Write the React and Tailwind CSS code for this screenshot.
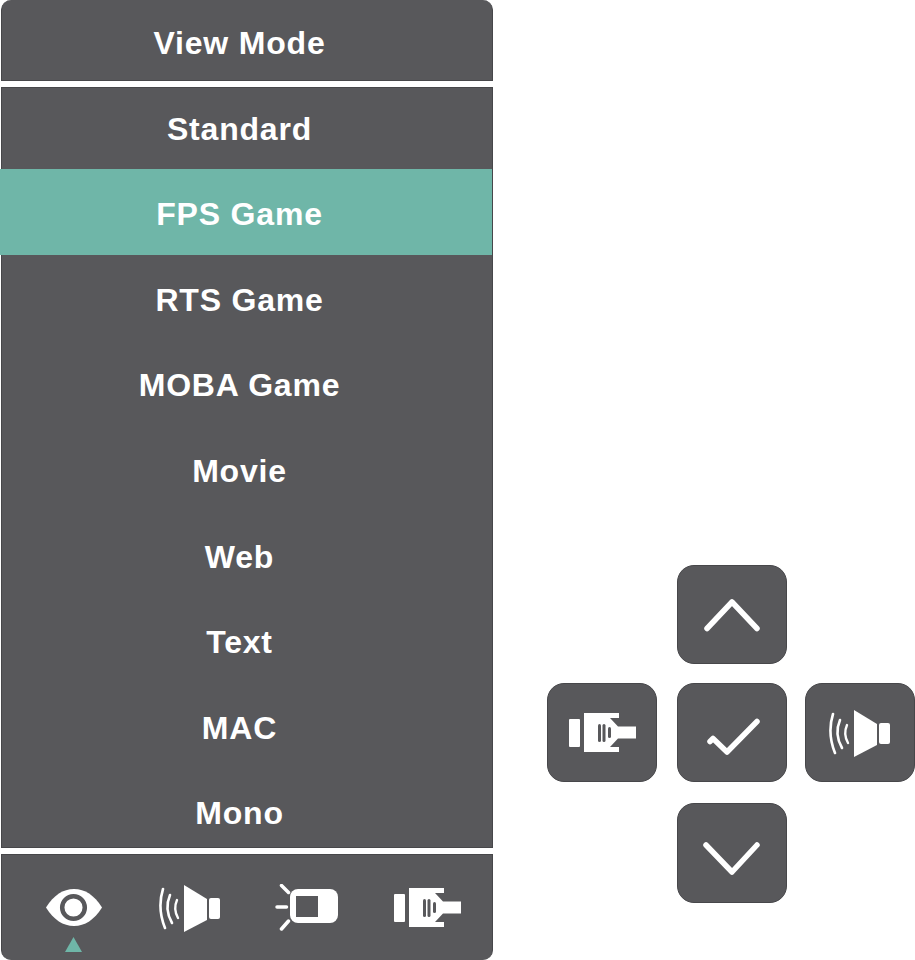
const ROWS = ["FPS Game", "RTS Game", "MOBA Game", "Movie", "Web", "Text", "MAC"];

function Speaker() {
  return (
    <svg width="64" height="50" viewBox="0 0 64 50" className="block">
      <path d="M26 2 L49 16 V37 L26 49 Z" fill="#fff" />
      <rect x="51" y="15" width="11" height="21" rx="2" fill="#fff" />
      <g fill="none" stroke="#fff" strokeLinecap="round">
        <path d="M5 6 Q-1 25 7 45" strokeWidth="2.600" />
        <path d="M12 12 Q6 26 14 40" strokeWidth="2.600" />
        <path d="M19 17 Q15 26 20 35" strokeWidth="2.400" />
      </g>
    </svg>
  );
}

function Plug() {
  return (
    <svg width="67" height="39" viewBox="0 0 67 39" className="block">
      <rect x="0" y="6" width="11" height="28" rx="1" fill="#fff" />
      <path d="M15 0 H50 V5 H41 L49 13.500 H67 V25.500 H49 L41 34 H50 V39 H15 Z" fill="#fff" />
      <rect x="29" y="11" width="3" height="18" rx="1.500" fill="#58585b" />
      <rect x="33.500" y="11" width="3" height="18" rx="1.500" fill="#58585b" />
      <rect x="39" y="14" width="3" height="11" rx="1.500" fill="#58585b" />
    </svg>
  );
}

function Eye() {
  return (
    <svg width="56" height="37" viewBox="0 0 56 37" className="block">
      <path d="M0 18.500 C8 6 17 0 28 0 C39 0 48 6 56 18.500 C48 31 39 37 28 37 C17 37 8 31 0 18.500 Z" fill="#fff" />
      <circle cx="27.500" cy="18.500" r="11.300" fill="none" stroke="#58585b" strokeWidth="4.500" />
    </svg>
  );
}

function Brightness() {
  return (
    <svg width="64" height="47" viewBox="0 0 64 47" className="block">
      <rect x="15" y="5" width="48" height="34" rx="8" fill="#fff" />
      <rect x="21" y="12" width="22" height="21" fill="#58585b" />
      <g stroke="#fff" strokeWidth="3.500" strokeLinecap="round">
        <path d="M6.500 1.500 L13.500 8.500" />
        <path d="M2 23 H11.500" />
        <path d="M6.500 45 L13.500 37" />
      </g>
    </svg>
  );
}

function Stroke({ d, h }) {
  return (
    <svg width="60" height={h} viewBox={`0 0 60 ${h}`} className="block">
      <path d={d} fill="none" stroke="#fff" strokeWidth="5.500" strokeLinecap="round" strokeLinejoin="round" />
    </svg>
  );
}

function PadButton({ children }) {
  return (
    <div className="flex h-full w-[110px] items-center justify-center rounded-[17px] border border-[#47474a] bg-[#58585b]">
      {children}
    </div>
  );
}

export default function App() {
  return (
    <div className="flex h-[960px] w-[915px] bg-white font-['Liberation_Sans',Arial,sans-serif] text-[32px] font-bold tracking-[0.8px] text-white">
      <div className="ml-px flex w-[492px] shrink-0 flex-col">
        <div className="flex h-[81px] items-center justify-center rounded-t-[10px] border-x border-b border-[#47474a] bg-[#58585b] pr-[15px] pt-[5px]">
          View Mode
        </div>
        <div className="mt-[6px] flex h-[761px] flex-col border-x border-y border-[#47474a] bg-[#58585b]">
          <div className="flex h-[81px] items-center justify-center pr-[15px] pt-[2px]">Standard</div>
          {ROWS.map((label, i) => (
            <div
              key={label}
              className={`flex h-[85.6px] items-center justify-center pt-[5px] ${i === 0 ? "-ml-[2px] bg-[#6fb6a8] pr-[13px]" : "pr-[15px]"}`}
            >
              {label}
            </div>
          ))}
          <div className="flex h-[79px] items-center justify-center pr-[15px] pt-[11px]">Mono</div>
        </div>
        <div className="mt-[6px] grid h-[106px] grid-cols-[112px_117px_119px_67px] items-center rounded-b-[10px] border-x border-t border-[#47474a] bg-[#58585b] pl-[44px]">
          <div className="relative w-[56px]">
            <Eye />
            <svg width="17" height="15" viewBox="0 0 17 15" className="absolute left-[19px] top-[48px] block">
              <path d="M8.500 0 L17 15 H0 Z" fill="#6fb6a8" />
            </svg>
          </div>
          <Speaker />
          <Brightness />
          <Plug />
        </div>
      </div>
      <div className="ml-[54px] mt-[565px] grid h-[338px] grid-cols-[130px_128px_110px] grid-rows-[118px_120px_100px]">
        <div className="col-start-2 row-start-1 h-[99px]">
          <PadButton>
            <Stroke h={40} d="M5 33.500 L30 7 L55 33.500" />
          </PadButton>
        </div>
        <div className="col-start-1 row-start-2 h-[99px]">
          <PadButton>
            <Plug />
          </PadButton>
        </div>
        <div className="col-start-2 row-start-2 h-[99px]">
          <PadButton>
            <Stroke h={50} d="M8 33.500 L11 30.500 L25 44 L55 13.500" />
          </PadButton>
        </div>
        <div className="col-start-3 row-start-2 h-[99px]">
          <PadButton>
            <Speaker />
          </PadButton>
        </div>
        <div className="col-start-2 row-start-3 h-[100px]">
          <PadButton>
            <Stroke h={60} d="M4 22 L30 49 L55 22" />
          </PadButton>
        </div>
      </div>
    </div>
  );
}
